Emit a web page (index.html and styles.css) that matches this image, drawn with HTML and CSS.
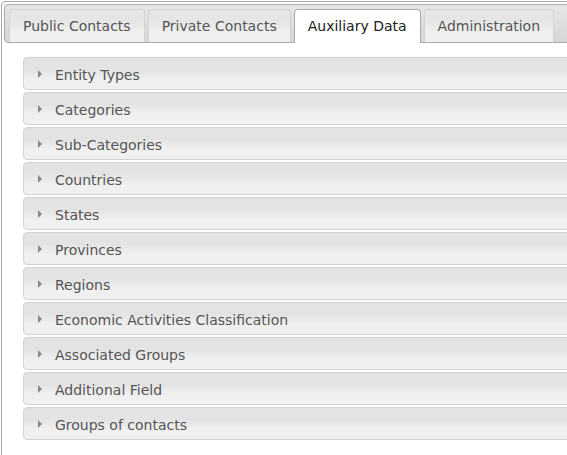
FILE: index.html
```html
<!DOCTYPE html>
<html>
<head>
<meta charset="utf-8">
<link rel="stylesheet" href="styles.css">
</head>
<body>
<div class="tabs">
  <ul class="nav">
    <li class="tab">Public Contacts</li>
    <li class="tab">Private Contacts</li>
    <li class="tab active">Auxiliary Data</li>
    <li class="tab">Administration</li>
  </ul>
  <div class="panel">
    <div class="acc-head"><span class="tri"></span>Entity Types</div>
    <div class="acc-head"><span class="tri"></span>Categories</div>
    <div class="acc-head"><span class="tri"></span>Sub-Categories</div>
    <div class="acc-head"><span class="tri"></span>Countries</div>
    <div class="acc-head"><span class="tri"></span>States</div>
    <div class="acc-head"><span class="tri"></span>Provinces</div>
    <div class="acc-head"><span class="tri"></span>Regions</div>
    <div class="acc-head"><span class="tri"></span>Economic Activities Classification</div>
    <div class="acc-head"><span class="tri"></span>Associated Groups</div>
    <div class="acc-head"><span class="tri"></span>Additional Field</div>
    <div class="acc-head"><span class="tri"></span>Groups of contacts</div>
  </div>
</div>
</body>
</html>
```
FILE: styles.css
```css
html, body {
  margin: 0;
  overflow: hidden;
  height: 100%;
}
body {
  padding: 1px 0 0 1px;
  box-sizing: border-box;
  font-family: "DejaVu Sans", Verdana, sans-serif;
  font-size: 14px;
  background: #fff;
}
.tabs {
  width: 700px;
  min-height: 470px;
  border: 1px solid #aaa;
  border-radius: 4px;
  padding: 2px;
  background: #fff;
}
.nav {
  list-style: none;
  margin: 0;
  padding: 4px 3px 0 4px;
  display: flex;
  border: 1px solid #aaa;
  border-radius: 4px;
  background: linear-gradient(#e6e6e6, #d6d6d6);
  height: 39px;
  box-sizing: border-box;
}
.tab {
  height: 33px;
  box-sizing: border-box;
  border: 1px solid #d3d3d3;
  border-bottom: 0;
  border-top-left-radius: 4px;
  border-top-right-radius: 4px;
  margin-right: 3px;
  padding: 0 13px;
  line-height: 32px;
  color: #555;
  background: linear-gradient(#e6e6e6 0%, #e6e6e6 35%, #f0f0f0 70%, #f0f0f0 100%);
  white-space: nowrap;
}
.tab.active {
  background: #fff;
  border-color: #aaa;
  color: #212121;
  height: 34px;
  margin-bottom: -1px;
}
.panel {
  padding: 12px 0 0 19px;
}
.acc-head {
  margin-top: 2px;
  height: 33px;
  box-sizing: border-box;
  border: 1px solid #d3d3d3;
  border-radius: 4px;
  padding: 3px 0 0 31px;
  line-height: 29px;
  color: #555;
  background: linear-gradient(#e3e3e3 0%, #e3e3e3 35%, #f0f0f0 70%, #f0f0f0 100%);
  position: relative;
  white-space: nowrap;
}
.tri {
  position: absolute;
  left: 14px;
  top: 12px;
  width: 0;
  height: 0;
  border-top: 4px solid transparent;
  border-bottom: 4px solid transparent;
  border-left: 4px solid #888;
}
```
